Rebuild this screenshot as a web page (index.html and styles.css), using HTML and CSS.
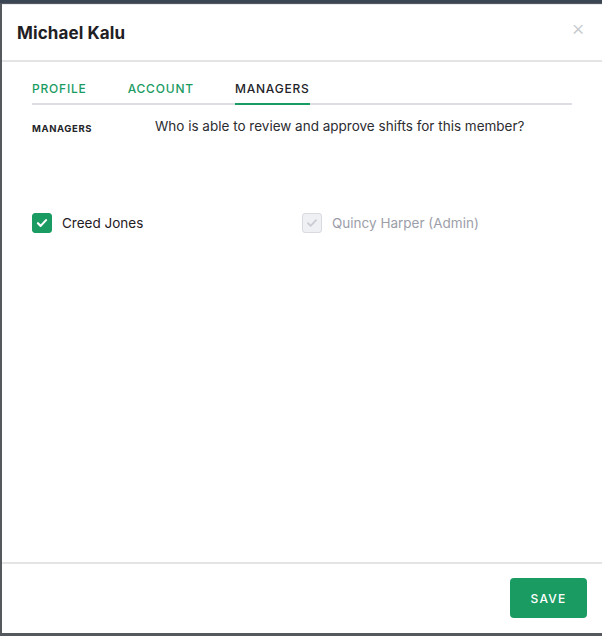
FILE: index.html
```html
<!DOCTYPE html>
<html lang="en">
<head>
  <meta charset="UTF-8">
  <meta name="viewport" content="width=device-width, initial-scale=1.0">
  <title>Michael Kalu - Managers</title>
  <link rel="stylesheet" href="styles.css">
</head>
<body>
  <div class="backdrop">
    <div class="modal">
      <div class="modal-header">
        <h1>Michael Kalu</h1>
        <span class="close">&times;</span>
      </div>
      <div class="modal-body">
        <div class="tabs">
          <a class="tab">Profile</a>
          <a class="tab">Account</a>
          <a class="tab active">Managers</a>
        </div>
        <div class="section">
          <div class="label">Managers</div>
          <p class="question">Who is able to review and approve shifts for this member?</p>
        </div>
        <div class="managers">
          <label class="check">
            <span class="box checked">
              <svg viewBox="0 0 20 20" width="20" height="20"><path d="M5.5 10.2l3 3 6-6.4" fill="none" stroke="#fff" stroke-width="2.4" stroke-linecap="round" stroke-linejoin="round"/></svg>
            </span>
            Creed Jones
          </label>
          <label class="check disabled">
            <span class="box">
              <svg viewBox="0 0 20 20" width="20" height="20"><path d="M5.5 10.2l3 3 6-6.4" fill="none" stroke="#c9ccd3" stroke-width="2" stroke-linecap="round" stroke-linejoin="round"/></svg>
            </span>
            Quincy Harper (Admin)
          </label>
        </div>
      </div>
      <div class="modal-footer">
        <button class="button">Save</button>
      </div>
    </div>
  </div>
</body>
</html>
```

FILE: styles.css
```css
html, body {
  margin: 0;
  height: 100%;
}
body {
  font-family: Inter, 'Liberation Sans', sans-serif;
  background-color: #55585c;
  color: #1f2024;
}
.backdrop {
  height: 100%;
  box-sizing: border-box;
  padding: 1px 0 3px 2px;
  border-top: 3px solid #3a4654;
  display: flex;
}
.modal {
  flex: 1;
  background-color: #ffffff;
  display: flex;
  flex-direction: column;
  border-top: 1px solid #e9ecef;
}
.modal-header {
  display: flex;
  justify-content: space-between;
  align-items: center;
  height: 55px;
  padding: 0 17px 0 15px;
  border-bottom: 2px solid #e4e4e6;
}
h1 {
  margin: 0;
  font-size: 17px;
  font-weight: 700;
  letter-spacing: 0.1px;
}
.close {
  color: #c6c8cc;
  font-size: 21px;
  font-weight: 300;
  line-height: 1;
  margin-top: -10px;
}
.modal-body {
  flex: 1;
  padding: 0 30px;
}
.tabs {
  display: flex;
  gap: 41px;
  border-bottom: 2px solid #dddee3;
  margin-top: 19px;
}
.tab {
  font-size: 12px;
  font-weight: 500;
  letter-spacing: 0.8px;
  text-transform: uppercase;
  color: #1a9b62;
  padding-bottom: 7px;
  margin-bottom: -2px;
  border-bottom: 2px solid transparent;
}
.tab.active {
  color: #232428;
  border-bottom-color: #1a9b62;
}
.section {
  display: flex;
  align-items: flex-start;
  margin-top: 13px;
}
.label {
  width: 123px;
  padding-top: 5px;
  font-size: 9.5px;
  font-weight: 700;
  letter-spacing: 0.6px;
  text-transform: uppercase;
  color: #232428;
}
.question {
  margin: 0;
  font-size: 13.5px;
  color: #2c2d31;
}
.managers {
  display: flex;
  margin-top: 79px;
}
.check {
  width: 270px;
  display: flex;
  align-items: center;
  gap: 10px;
  font-size: 13.5px;
  color: #1f2024;
}
.check.disabled {
  color: #9c9ea9;
}
.box {
  width: 18px;
  height: 18px;
  border-radius: 3px;
  border: 1px solid #d8dae0;
  background-color: #eef0f3;
  display: flex;
  align-items: center;
  justify-content: center;
}
.box svg {
  width: 18px;
  height: 18px;
}
.box.checked {
  background-color: #1a9b62;
  border-color: #1a9b62;
}
.modal-footer {
  display: flex;
  justify-content: flex-end;
  padding: 14px 15px 15px;
  border-top: 2px solid #e4e4e6;
}
.button {
  font-family: inherit;
  width: 77px;
  height: 40px;
  border: none;
  border-radius: 4px;
  background-color: #1a9b62;
  color: #ffffff;
  font-size: 12px;
  font-weight: 500;
  letter-spacing: 1.2px;
  text-transform: uppercase;
}
```
